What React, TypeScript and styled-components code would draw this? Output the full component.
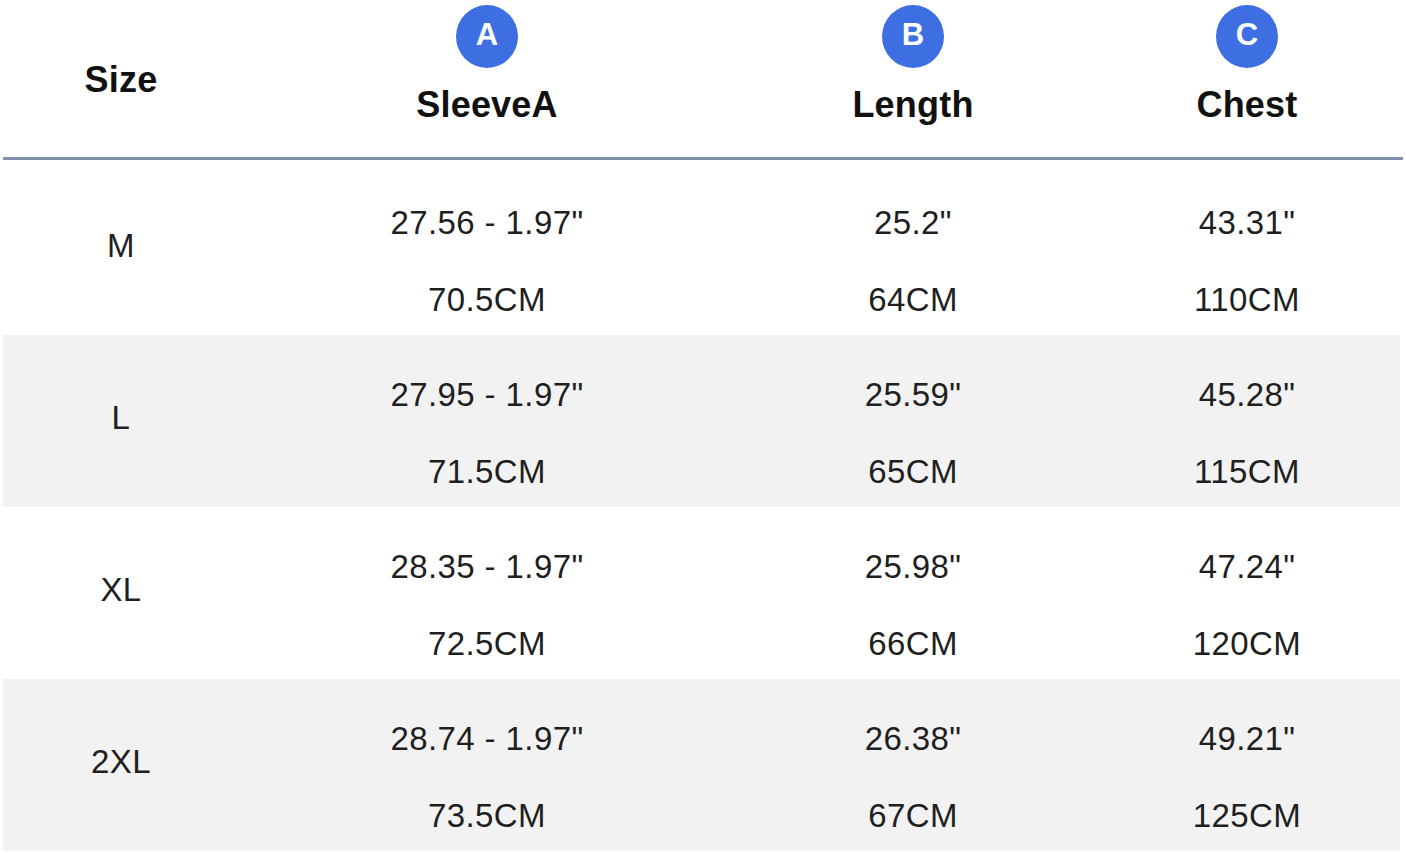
import React from "react";
import styled, { createGlobalStyle } from "styled-components";

const GlobalStyle = createGlobalStyle`
  html, body {
    margin: 0;
    padding: 0;
    background: #ffffff;
  }
  body {
    font-family: "Liberation Sans", Arial, Helvetica, sans-serif;
    color: #1f1f1f;
  }
`;

const COLS = "236px 496px 356px 312px";

const Table = styled.div`
  width: 1400px;
  padding-left: 3px;
`;

const HeaderRow = styled.div`
  display: grid;
  grid-template-columns: ${COLS};
  height: 157px;
`;

const SizeHeading = styled.div`
  padding-top: 61px;
  text-align: center;
  font-size: 36px;
  font-weight: 700;
  line-height: 38px;
  letter-spacing: 0.2px;
  color: #111111;
`;

const ColumnHeading = styled.div`
  display: flex;
  flex-direction: column;
  align-items: center;
  padding-top: 5px;
  gap: 18px;
`;

const Badge = styled.div`
  width: 62px;
  height: 63px;
  border-radius: 50%;
  background: #3d6fe2;
  color: #ffffff;
  display: flex;
  align-items: center;
  justify-content: center;
  padding-bottom: 5px;
  box-sizing: border-box;
  font-size: 31px;
  font-weight: 700;
  line-height: 1;
`;

const HeadingText = styled.div`
  font-size: 36px;
  font-weight: 700;
  line-height: 38px;
  letter-spacing: 0.2px;
  color: #111111;
`;

const Rule = styled.div`
  height: 3px;
  background: #7d91a8;
`;

const Body = styled.div`
  padding-top: 3px;
`;

const Row = styled.div<{ $shade: boolean }>`
  display: grid;
  grid-template-columns: ${COLS};
  height: 172px;
  background: ${(p) => (p.$shade ? "#f2f2f2" : "#ffffff")};
  margin-right: 3px;
`;

const SizeCell = styled.div`
  padding-top: 64px;
  text-align: center;
  font-size: 33px;
  line-height: 38px;
  letter-spacing: 0.4px;
  color: #1f1f1f;
`;

const ValueCell = styled.div`
  display: flex;
  flex-direction: column;
  align-items: center;
  padding-top: 41px;
  gap: 39px;
`;

const ValueLine = styled.div`
  font-size: 33px;
  line-height: 38px;
  letter-spacing: 0.4px;
  color: #1f1f1f;
  white-space: nowrap;
`;

type Cell = [string, string];
const rows: { size: string; cells: Cell[] }[] = [
  { size: "M", cells: [["27.56 - 1.97\"", "70.5CM"], ["25.2\"", "64CM"], ["43.31\"", "110CM"]] },
  { size: "L", cells: [["27.95 - 1.97\"", "71.5CM"], ["25.59\"", "65CM"], ["45.28\"", "115CM"]] },
  { size: "XL", cells: [["28.35 - 1.97\"", "72.5CM"], ["25.98\"", "66CM"], ["47.24\"", "120CM"]] },
  { size: "2XL", cells: [["28.74 - 1.97\"", "73.5CM"], ["26.38\"", "67CM"], ["49.21\"", "125CM"]] },
];

const headings = [
  { badge: "A", label: "SleeveA" },
  { badge: "B", label: "Length" },
  { badge: "C", label: "Chest" },
];

export default function App() {
  return (
    <>
      <GlobalStyle />
      <Table>
        <HeaderRow>
          <SizeHeading>Size</SizeHeading>
          {headings.map((h) => (
            <ColumnHeading key={h.badge}>
              <Badge>{h.badge}</Badge>
              <HeadingText>{h.label}</HeadingText>
            </ColumnHeading>
          ))}
        </HeaderRow>
        <Rule />
        <Body>
          {rows.map((r, i) => (
            <Row key={r.size} $shade={i % 2 === 1}>
              <SizeCell>{r.size}</SizeCell>
              {r.cells.map((c, j) => (
                <ValueCell key={j}>
                  <ValueLine>{c[0]}</ValueLine>
                  <ValueLine>{c[1]}</ValueLine>
                </ValueCell>
              ))}
            </Row>
          ))}
        </Body>
      </Table>
    </>
  );
}
